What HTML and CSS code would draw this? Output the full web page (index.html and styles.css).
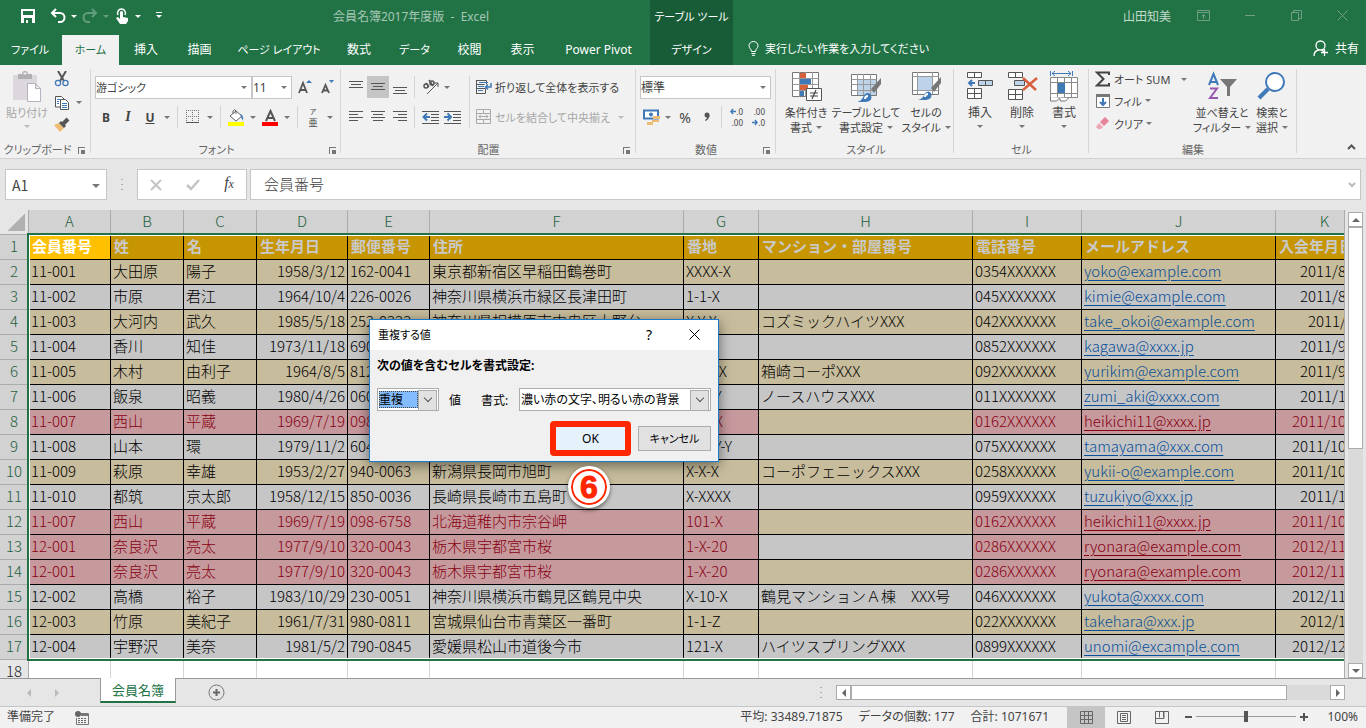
FILE: index.html
```
<!DOCTYPE html>
<html lang="ja">

<head>
    <meta charset="UTF-8">
    <title>会員名簿2017年度版 - Excel</title>
    <link rel="stylesheet" href="styles.css">
</head>

<body>
    <header class="header">
        <div class="header-main">
            <div class="titlebar">
                <div class="quick">
                    <button aria-label="上書き保存"><svg width="16" height="16" viewBox="0 0 16 16"><path d="M1 1h14v14H1z" fill="#fff"/><path d="M3 3h10v4H3zM4 10h8v5H4z" fill="#217346"/><path d="M6 12h2v3H6z" fill="#fff"/></svg></button>
                    <button aria-label="元に戻す"><svg width="16" height="16" viewBox="0 0 16 16"><path d="M2 5h8a4 4 0 0 1 0 9H8M6 1L2 5l4 4" fill="none" stroke="#fff" stroke-width="2"/></svg></button>
                    <span class="caret"></span>
                    <button class="faded" aria-label="やり直し"><svg width="16" height="16" viewBox="0 0 16 16"><path d="M14 5H6a4 4 0 0 0 0 9h2M10 1l4 4-4 4" fill="none" stroke="#fff" stroke-width="2"/></svg></button>
                    <span class="caret faded"></span>
                    <button aria-label="タッチ"><svg width="16" height="18" viewBox="0 0 16 18"><path d="M4 8a4 4 0 1 1 7 0" fill="none" stroke="#fff" stroke-width="1.500"/><path d="M6 5q1.500-2 3 0v5l5 1v3l-2 3H6l-4-6 2-1 2 2z" fill="#fff"/></svg></button>
                    <span class="caret"></span>
                    <span class="caret more"></span>
                </div>
                <div class="doc-title">会員名簿2017年度版&nbsp; -&nbsp; Excel</div>
            </div>
            <nav class="tabs">
                <button class="kana">ファイル</button>
                <button class="kana active">ホーム</button>
                <button>挿入</button>
                <button>描画</button>
                <button class="kana">ページ レイアウト</button>
                <button>数式</button>
                <button class="kana">データ</button>
                <button>校閲</button>
                <button>表示</button>
                <button>Power Pivot</button>
            </nav>
        </div>
        <div class="context kana">
            <span>テーブル ツール</span>
            <button>デザイン</button>
        </div>
        <div class="header-side">
            <div class="account">
                <span class="user">山田知美</span>
                <button aria-label="リボンの表示オプション"><svg width="13" height="11" viewBox="0 0 13 11"><path d="M.5.5h12v10H.5zM.5 2.500h12M6.500 9V4.500M4.500 6.500l2-2 2 2" fill="none" stroke="currentColor"/></svg></button>
                <button aria-label="最小化"><svg width="11" height="11" viewBox="0 0 11 11"><path d="M0 5.500h10" stroke="currentColor"/></svg></button>
                <button aria-label="元のサイズに戻す"><svg width="11" height="11" viewBox="0 0 11 11"><path d="M.5 2.500h7v8h-7zM2.500 2.500v-2h8v8h-3" fill="none" stroke="currentColor"/></svg></button>
                <button aria-label="閉じる"><svg width="11" height="11" viewBox="0 0 11 11"><path d="M.5.5l10 10M10.500.5l-10 10" stroke="currentColor"/></svg></button>
            </div>
            <div class="tell-row">
                <button class="tell kana"><svg width="11" height="15" viewBox="0 0 11 15"><path d="M3.500 10.500C3.500 8 1 7.500 1 4.800a4.500 4.300 0 0 1 9 0c0 2.700-2.500 3.200-2.500 5.700zM3.500 12.500h4M4 14.300h3" fill="none" stroke="#fff"/></svg>実行したい作業を入力してください</button>
                <button class="share"><svg width="16" height="17" viewBox="0 0 16 17"><circle cx="7.500" cy="5.500" r="4.500" fill="none" stroke="#fff" stroke-width="1.300"/><path d="M1 16c0-3 2-5.500 5-6M9 10l2 2M11.500 9v7M8 12.500h7" fill="none" stroke="#fff" stroke-width="1.300"/></svg>共有</button>
            </div>
        </div>
    </header>

    <section class="ribbon">
        <!-- clipboard -->
        <div class="group clipboard">
            <div class="group-body">
                <button class="big disabled kana">
                    <svg width="32" height="32" viewBox="0 0 32 32"><path d="M2 4h24v25H2z" fill="#dcd7dc"/><path d="M7 3h4a3 3 0 0 1 6 0h4v5H7z" fill="#b3aeb3"/><path d="M12.500 1.500h3v2h-3z" fill="#f0f0f0"/><path d="M16.500 12.500h8l5 5v13h-13zM24.500 12.500v5h5" fill="#fff" stroke="#b9b0c0"/></svg>
                    <span>貼り付け</span><i class="caret"></i>
                </button>
                <div class="clip-side">
                    <button class="tb" aria-label="切り取り"><svg width="16" height="16" viewBox="0 0 16 16"><path d="M4 0l6 10M12 0L6 10" stroke="#555" stroke-width="2"/><circle cx="4" cy="12" r="2.600" fill="none" stroke="#3f79b7" stroke-width="1.300"/><circle cx="11.500" cy="12" r="2.600" fill="none" stroke="#3f79b7" stroke-width="1.300"/></svg></button>
                    <div><button class="tb" aria-label="コピー"><svg width="16" height="16" viewBox="0 0 16 16"><path d="M1.500 1.500h6l3 3V12h-9z" fill="#fff" stroke="#555"/><path d="M6.500 4.500h5l3 3v7h-8z" fill="#fff" stroke="#555"/><path d="M3 4.500h3M3 6.500h2M3 8.500h2M8 8.500h5M8 10.500h5M8 12.500h5" stroke="#3f79b7"/></svg></button><i class="caret"></i></div>
                    <button class="tb" aria-label="書式のコピー"><svg width="16" height="16" viewBox="0 0 16 16"><path d="M0 8l5-2 5 5-4 4z" fill="#edbb71"/><path d="M6 5l5 5" stroke="#555" stroke-width="3"/><path d="M9 7l5-5" stroke="#555" stroke-width="4"/></svg></button>
                </div>
            </div>
            <div class="group-label">クリップボード<i class="launcher"></i></div>
        </div>

        <!-- font -->
        <div class="group font">
            <div class="group-body rows">
                <div class="row">
                    <span class="select font-name"><select aria-label="フォント" class="kana"><option>游ゴシック</option></select></span>
                    <span class="select font-size"><select aria-label="フォント サイズ"><option>11</option></select></span>
                    <button class="tb grow" aria-label="フォント サイズの拡大"><svg width="17" height="16" viewBox="0 0 17 16"><path d="M2 14L6 4l4 10M3.500 11h5" fill="none" stroke="#555" stroke-width="1.800"/><path d="M9 4l3-3 3 3z" fill="#3f79b7"/></svg></button>
                    <button class="tb" aria-label="フォント サイズの縮小"><svg width="17" height="16" viewBox="0 0 17 16"><path d="M3 14l3.500-8 3.500 8M4.500 11.500h4" fill="none" stroke="#555" stroke-width="1.800"/><path d="M10 1h5l-2.500 3z" fill="#3f79b7"/></svg></button>
                </div>
                <div class="row">
                    <button class="tb"><b>B</b></button>
                    <button class="tb italic">I</button>
                    <button class="tb underline"><b>U</b></button><i class="caret"></i>
                    <i class="sep"></i>
                    <button class="tb" aria-label="罫線"><svg width="14" height="14" viewBox="0 0 14 14"><path d="M0 .5h14M0 6.500h14M.5 0v12M6.500 0v12M12.500 0v12" stroke="#777" stroke-dasharray="1 1"/><path d="M0 12.500h13" stroke="#555"/></svg></button><i class="caret"></i>
                    <i class="sep"></i>
                    <button class="tb" aria-label="塗りつぶしの色"><svg width="17" height="17" viewBox="0 0 17 17"><path d="M2 7l6-5 6 5-6 5z" fill="#fff" stroke="#666"/><path d="M5 5V2q2-3 3 0v3" fill="none" stroke="#666"/><path d="M12 5q4 1 3 7l-2-4z" fill="#3f79b7"/><path d="M0 13h16v4H0z" fill="#ff0"/></svg></button><i class="caret"></i>
                    <button class="tb" aria-label="フォントの色"><svg width="17" height="17" viewBox="0 0 17 17"><path d="M4 12l4.500-10L13 12M5.500 9h6" fill="none" stroke="#555" stroke-width="2"/><path d="M0 13h16v4H0z" fill="#f00"/></svg></button><i class="caret"></i>
                    <i class="sep"></i>
                    <button class="tb ruby"><small>ア</small><span>亜</span></button><i class="caret"></i>
                </div>
            </div>
            <div class="group-label">フォント<i class="launcher"></i></div>
        </div>

        <!-- alignment -->
        <div class="group align">
            <div class="group-body">
                <div class="align-grid">
                    <button class="tb" aria-label="上揃え"><svg width="14" height="18" viewBox="0 0 14 18"><path d="M0 3.500h14M2 6.500h10M0 9.500h14" stroke="#555"/></svg></button>
                    <button class="tb on" aria-label="上下中央揃え"><svg width="14" height="18" viewBox="0 0 14 18"><path d="M0 5.500h14M2 8.500h10M0 11.500h14" stroke="#555"/></svg></button>
                    <button class="tb" aria-label="下揃え"><svg width="14" height="18" viewBox="0 0 14 18"><path d="M0 9.500h14M2 12.500h10M0 15.500h14" stroke="#555"/></svg></button>
                    <button class="tb left-line" aria-label="方向"><svg width="18" height="18" viewBox="0 0 18 18"><g fill="none" stroke="#555" stroke-width="1.500"><circle cx="4" cy="8" r="2"/><path d="M4 5l3 4M7 2l4 6"/><circle cx="10" cy="5" r="2"/></g><path d="M5 16L16 5M12 5h4v4" fill="none" stroke="#555"/></svg><i class="caret"></i></button>
                    <button class="tb" aria-label="左揃え"><svg width="14" height="14" viewBox="0 0 14 14"><path d="M0 1.500h14M0 4.500h9M0 7.500h14M0 10.500h9" stroke="#555"/></svg></button>
                    <button class="tb" aria-label="中央揃え"><svg width="14" height="14" viewBox="0 0 14 14"><path d="M0 1.500h14M2 4.500h10M0 7.500h14M2 10.500h10" stroke="#555"/></svg></button>
                    <button class="tb" aria-label="右揃え"><svg width="14" height="14" viewBox="0 0 14 14"><path d="M0 1.500h14M5 4.500h9M0 7.500h14M5 10.500h9" stroke="#555"/></svg></button>
                    <span class="left-line indent">
                        <button aria-label="インデントを減らす"><svg width="17" height="14" viewBox="0 0 17 14"><path d="M0 1.500h17M9 4.500h8M9 7.500h8M9 10.500h8M0 13.500h17" stroke="#555"/><path d="M8 7H2M5 3.500L1.500 7 5 10.500" fill="none" stroke="#3f79b7" stroke-width="2"/></svg></button>
                        <button aria-label="インデントを増やす"><svg width="17" height="14" viewBox="0 0 17 14"><path d="M0 1.500h17M9 4.500h8M9 7.500h8M9 10.500h8M0 13.500h17" stroke="#555"/><path d="M0 7h6M3.500 3.500L7 7l-3.500 3.500" fill="none" stroke="#3f79b7" stroke-width="2"/></svg></button>
                    </span>
                </div>
                <div class="wrap-col kana">
                    <button><svg width="16" height="16" viewBox="0 0 16 16"><path d="M.5 1v14M.5 1.500h10v4M.5 5.500h8M.5 9.500h9v5h-9" fill="none" stroke="#555"/><path d="M3 3.500h9M2 7.500h6M2 11.500h5" stroke="#3f79b7"/><path d="M15 4v4h-5M12 5.500L9.500 8l2.500 2.500" fill="none" stroke="#3f79b7" stroke-width="1.500"/></svg>折り返して全体を表示する</button>
                    <button class="disabled"><svg width="16" height="16" viewBox="0 0 16 16"><path d="M.5.5h14v14H.5zM.5 4.500h14M.5 10.500h14M7.500.5v4M7.500 10.500v4M3 7.500h9M5 5.500l-2 2 2 2M10 5.500l2 2-2 2" fill="none" stroke="#aaa"/></svg>セルを結合して中央揃え<i class="caret"></i></button>
                </div>
            </div>
            <div class="group-label">配置<i class="launcher"></i></div>
        </div>

        <!-- number -->
        <div class="group number">
            <div class="group-body rows">
                <div class="row">
                    <span class="select num-format"><select aria-label="表示形式"><option>標準</option></select></span>
                </div>
                <div class="row">
                    <button class="tb" aria-label="通貨表示形式"><svg width="17" height="17" viewBox="0 0 17 17"><path d="M1 1.500h14v8H1z" fill="#fff" stroke="#3f79b7" stroke-width="2"/><circle cx="8" cy="5.500" r="2" fill="#3f79b7"/><path d="M10 7h7v3h-7zM9 11h7v2H9zM4 13h6v3H4z" fill="#edbb71"/></svg></button><i class="caret"></i>
                    <button class="tb percent">%</button>
                    <button class="tb" aria-label="桁区切りスタイル"><svg width="8" height="10" viewBox="0 0 8 10"><circle cx="4" cy="3" r="2.500" fill="#555"/><path d="M6.500 3q0 4-4 6l-.5-1q2-1 2-3z" fill="#555"/></svg></button>
                    <i class="sep"></i>
                    <button class="tb decimal"><span><svg width="6" height="7" viewBox="0 0 6 7"><path d="M6 3.500H1M3 1L1 3.500 3 6" fill="none" stroke="#3f79b7" stroke-width="1.500"/></svg>.0</span><span>.00</span></button>
                    <button class="tb decimal"><span>.00</span><span><svg width="6" height="7" viewBox="0 0 6 7"><path d="M0 3.500h5M3 1l2 2.500L3 6" fill="none" stroke="#3f79b7" stroke-width="1.500"/></svg>.0</span></button>
                </div>
            </div>
            <div class="group-label">数値<i class="launcher"></i></div>
        </div>

        <!-- styles -->
        <div class="group styles">
            <div class="group-body kana">
                <button class="big"><svg width="32" height="32" viewBox="0 0 32 32"><path d="M2.500 1.500h26v24h-26z" fill="#fff" stroke="#777"/><path d="M2.500 7.500h26M2.500 13.500h26M2.500 19.500h26M9.500 1v25M15.500 1v25M22.500 1v25" stroke="#999"/><path d="M10 2h6v5h-6zM10 14h8v5h-8z" fill="#d9603d"/><path d="M10 8h11v5H10zM10 20h4v5h-4z" fill="#3f79b7"/><path d="M16.500 17.500h15v12h-15z" fill="#fff" stroke="#555"/><path d="M20 22h8M20 25h8M26 19l-4 9" stroke="#444" stroke-width="1.200"/></svg><span>条件付き</span><span>書式<i class="caret"></i></span></button>
                <button class="big wide"><svg width="32" height="32" viewBox="0 0 32 32"><path d="M1.500 3.500h25v21h-25z" fill="#fff" stroke="#777"/><path d="M8 9h18v15H8z" fill="#bdd3ea"/><path d="M1.500 8.500h25M1.500 13.500h25M1.500 19.500h25M7.500 3v21M13.500 3v21M20.500 3v21" stroke="#999"/><path d="M31 7v6l-7 9-3-4z" fill="#777"/><path d="M7 31q5-1 7-7 4-4 7 0 2 6-5 7z" fill="#3f79b7"/><path d="M15 28q0-3 3-3" fill="none" stroke="#fff" stroke-width="2"/></svg><span>テーブルとして</span><span>書式設定<i class="caret"></i></span></button>
                <button class="big"><svg width="32" height="32" viewBox="0 0 32 32"><path d="M2.500 1.500h26v22h-26z" fill="#fff" stroke="#777"/><path d="M2.500 5.500h26M2.500 19.500h26M7.500 1v22M22.500 1v22" stroke="#999"/><path d="M8 6h14v13H8z" fill="#bdd3ea"/><path d="M31 6v6l-7 9-3-4z" fill="#777"/><path d="M8 29q5-1 7-7 4-3 6 0 2 6-5 7z" fill="#3f79b7"/><path d="M15 26q0-3 3-3" fill="none" stroke="#fff" stroke-width="2"/></svg><span>セルの</span><span>スタイル<i class="caret"></i></span></button>
            </div>
            <div class="group-label">スタイル</div>
        </div>

        <!-- cells -->
        <div class="group cells">
            <div class="group-body">
                <button class="big"><svg width="32" height="32" viewBox="0 0 32 32"><path d="M3.500 1.500h14v5h-14zM10.500 1.500v5M3.500 17.500h14v10h-14zM3.500 22.500h14M10.500 17.500v10" fill="#fff" stroke="#555"/><path d="M14.500 9.500h14v5h-14zM21.500 9.500v5" fill="#bdd3ea" stroke="#555"/><path d="M11 12H5M8 9l-3 3 3 3" fill="none" stroke="#3f79b7" stroke-width="2"/></svg><span>挿入</span><i class="caret"></i></button>
                <button class="big"><svg width="32" height="32" viewBox="0 0 32 32"><path d="M2.500 1.500h14v5h-14zM9.500 1.500v5M2.500 18.500h14v10h-14zM2.500 23.500h14M9.500 18.500v10" fill="#fff" stroke="#555"/><path d="M8.500 9.500h10v5h-10z" fill="#bdd3ea" stroke="#555"/><path d="M17 7l13 12M31 7L17 19" stroke="#d9603d" stroke-width="2.500"/></svg><span>削除</span><i class="caret"></i></button>
                <button class="big"><svg width="32" height="32" viewBox="0 0 32 32"><path d="M2.500 0v5M24.500 0v5M4 2.500h19M7 0L4 2.500 7 5M20 0l3 2.500L20 5" fill="none" stroke="#3f79b7"/><path d="M2.500 6.500h27v20h-27zM2.500 11.500h27M2.500 22.500h27M9.500 6v20M16.500 6v20M23.500 6v20" fill="#fff" stroke="#888"/><path d="M10 12h7v10h-7z" fill="#3f79b7"/><path d="M2.500 26v4h6l3-3 1 3h5l3-3" fill="#fff" stroke="#777"/></svg><span>書式</span><i class="caret"></i></button>
            </div>
            <div class="group-label">セル</div>
        </div>

        <!-- editing -->
        <div class="group editing">
            <div class="group-body kana">
                <div class="edit-col">
                    <button><svg width="16" height="16" viewBox="0 0 16 16"><path d="M14 4V1.500H2L8.500 8 2 14.500h12V12" fill="none" stroke="#444" stroke-width="2"/></svg>オート SUM<i class="caret far"></i></button>
                    <button><svg width="16" height="16" viewBox="0 0 16 16"><path d="M1.500 1.500h13v13h-13z" fill="#fff" stroke="#777"/><path d="M1 1h14v3H1z" fill="#777"/><path d="M8 5v7M5 9l3 3 3-3" fill="none" stroke="#3f79b7" stroke-width="2"/></svg>フィル<i class="caret"></i></button>
                    <button><svg width="16" height="16" viewBox="0 0 16 16"><path d="M5 6l5-5 4 4-5 5z" fill="#e8829a"/><path d="M4 7l4 4-2 2H3l-2-2z" fill="#eea5b4"/></svg>クリア<i class="caret"></i></button>
                </div>
                <button class="big sort"><svg width="32" height="32" viewBox="0 0 32 32"><path d="M3 14L7.500 3 12 14M5 11h6" fill="none" stroke="#3f79b7" stroke-width="2"/><path d="M4 17.500h7L4 27h8" fill="none" stroke="#9658b0" stroke-width="2"/><path d="M14 8h17l-7 8v9h-3v-9z" fill="#777"/></svg><span>並べ替えと</span><span>フィルター<i class="caret"></i></span></button>
                <button class="big"><svg width="32" height="32" viewBox="0 0 32 32"><circle cx="19" cy="11" r="9" fill="#fff" stroke="#3f79b7" stroke-width="2"/><path d="M12 18L3 27" stroke="#3f79b7" stroke-width="4"/></svg><span>検索と</span><span>選択<i class="caret"></i></span></button>
            </div>
            <div class="group-label">編集</div>
        </div>
        <button class="collapse" aria-label="リボンを折りたたむ"><svg width="9" height="6" viewBox="0 0 9 6"><path d="M1 5l3.500-3.500L8 5" fill="none" stroke="#555" stroke-width="2"/></svg></button>
    </section>

    <section class="formula-bar">
        <span class="select name-box"><input type="text" value="A1" aria-label="名前ボックス"></span>
        <i class="dots"></i>
        <div class="fx">
            <button aria-label="キャンセル"><svg width="12" height="12" viewBox="0 0 12 12"><path d="M1 1l10 10M11 1L1 11" stroke="#c4c4c4" stroke-width="2"/></svg></button>
            <button aria-label="入力"><svg width="14" height="12" viewBox="0 0 14 12"><path d="M1 6l4 4 8-9" fill="none" stroke="#c4c4c4" stroke-width="2.500"/></svg></button>
            <button class="fx-label">f<small>x</small></button>
        </div>
        <div class="formula">
            <input type="text" value="会員番号" aria-label="数式バー">
            <svg width="8" height="6" viewBox="0 0 8 6"><path d="M1 1l3 3 3-3" fill="none" stroke="#bbb" stroke-width="2"/></svg>
        </div>
    </section>

    <main class="work">
        <div class="sheet">
            <table>
                <colgroup>
                    <col class="c-head"><col class="c-a"><col class="c-b"><col class="c-c"><col class="c-d"><col class="c-e"><col class="c-f"><col class="c-g"><col class="c-h"><col class="c-i"><col class="c-j"><col class="c-k">
                </colgroup>
                <thead>
                    <tr><th class="corner"></th><th>A</th><th>B</th><th>C</th><th>D</th><th>E</th><th>F</th><th>G</th><th>H</th><th>I</th><th>J</th><th>K</th></tr>
                </thead>
                <tbody>
                    <tr class="title"><th>1</th><td class="current">会員番号</td><td>姓</td><td>名</td><td>生年月日</td><td>郵便番号</td><td>住所</td><td>番地</td><td>マンション・部屋番号</td><td>電話番号</td><td>メールアドレス</td><td>入会年月日</td></tr>
                    <tr><th>2</th><td>11-001</td><td>大田原</td><td>陽子</td><td>1958/3/12</td><td>162-0041</td><td>東京都新宿区早稲田鶴巻町</td><td>XXXX-X</td><td></td><td>0354XXXXXX</td><td><a href="#">yoko@example.com</a></td><td class="d9">2011/8</td></tr>
                    <tr><th>3</th><td>11-002</td><td>市原</td><td>君江</td><td>1964/10/4</td><td>226-0026</td><td>神奈川県横浜市緑区長津田町</td><td>1-1-X</td><td></td><td>045XXXXXXX</td><td><a href="#">kimie@example.com</a></td><td class="d9">2011/8</td></tr>
                    <tr><th>4</th><td>11-003</td><td>大河内</td><td>武久</td><td>1985/5/18</td><td>252-0333</td><td>神奈川県相模原市中央区大野台</td><td>X-Y-X</td><td>コズミックハイツXXX</td><td>042XXXXXXX</td><td><a href="#">take_okoi@example.com</a></td><td class="d8">2011/</td></tr>
                    <tr><th>5</th><td>11-004</td><td>香川</td><td>知佳</td><td>1973/11/18</td><td>690</td><td></td><td>X-X-X</td><td></td><td>0852XXXXXX</td><td><a href="#">kagawa@xxxx.jp</a></td><td class="d9">2011/9</td></tr>
                    <tr><th>6</th><td>11-005</td><td>木村</td><td>由利子</td><td>1964/8/5</td><td>812</td><td></td><td>X-XX-X</td><td>箱崎コーポXXX</td><td>092XXXXXXX</td><td><a href="#">yurikim@example.com</a></td><td class="d9">2011/9</td></tr>
                    <tr><th>7</th><td>11-006</td><td>飯泉</td><td>昭義</td><td>1980/4/26</td><td>060</td><td></td><td>XXX-Y</td><td>ノースハウスXXX</td><td>011XXXXXXX</td><td><a href="#">zumi_aki@xxxx.com</a></td><td class="d9">2011/1</td></tr>
                    <tr class="dup"><th>8</th><td>11-007</td><td>西山</td><td>平蔵</td><td>1969/7/19</td><td>098</td><td></td><td>101-X</td><td></td><td>0162XXXXXX</td><td><a href="#">heikichi11@xxxx.jp</a></td><td>2011/10</td></tr>
                    <tr><th>9</th><td>11-008</td><td>山本</td><td>環</td><td>1979/11/2</td><td>604</td><td></td><td>XXX-Y-Y</td><td></td><td>075XXXXXXX</td><td><a href="#">tamayama@xxx.com</a></td><td>2011/10</td></tr>
                    <tr><th>10</th><td>11-009</td><td>萩原</td><td>幸雄</td><td>1953/2/27</td><td>940-0063</td><td>新潟県長岡市旭町</td><td>X-X-X</td><td>コーポフェニックスXXX</td><td>0258XXXXXX</td><td><a href="#">yukii-o@example.com</a></td><td>2011/10</td></tr>
                    <tr><th>11</th><td>11-010</td><td>都筑</td><td>京太郎</td><td>1958/12/15</td><td>850-0036</td><td>長崎県長崎市五島町</td><td>X-XXXX</td><td></td><td>0959XXXXXX</td><td><a href="#">tuzukiyo@xxx.jp</a></td><td class="d9">2011/1</td></tr>
                    <tr class="dup"><th>12</th><td>11-007</td><td>西山</td><td>平蔵</td><td>1969/7/19</td><td>098-6758</td><td>北海道稚内市宗谷岬</td><td>101-X</td><td></td><td>0162XXXXXX</td><td><a href="#">heikichi11@xxxx.jp</a></td><td>2011/10</td></tr>
                    <tr class="dup"><th>13</th><td>12-001</td><td>奈良沢</td><td>亮太</td><td>1977/9/10</td><td>320-0043</td><td>栃木県宇都宮市桜</td><td>1-X-20</td><td></td><td>0286XXXXXX</td><td><a href="#">ryonara@example.com</a></td><td>2012/11</td></tr>
                    <tr class="dup"><th>14</th><td>12-001</td><td>奈良沢</td><td>亮太</td><td>1977/9/10</td><td>320-0043</td><td>栃木県宇都宮市桜</td><td>1-X-20</td><td></td><td>0286XXXXXX</td><td><a href="#">ryonara@example.com</a></td><td>2012/11</td></tr>
                    <tr><th>15</th><td>12-002</td><td>高橋</td><td>裕子</td><td>1983/10/29</td><td>230-0051</td><td>神奈川県横浜市鶴見区鶴見中央</td><td>X-10-X</td><td>鶴見マンションＡ棟　XXX号</td><td>046XXXXXXX</td><td><a href="#">yukota@xxxx.com</a></td><td>2012/11</td></tr>
                    <tr><th>16</th><td>12-003</td><td>竹原</td><td>美紀子</td><td>1961/7/31</td><td>980-0811</td><td>宮城県仙台市青葉区一番町</td><td>1-1-Z</td><td></td><td>022XXXXXXX</td><td><a href="#">takehara@xxx.jp</a></td><td class="d9">2012/1</td></tr>
                    <tr><th>17</th><td>12-004</td><td>宇野沢</td><td>美奈</td><td>1981/5/2</td><td>790-0845</td><td>愛媛県松山市道後今市</td><td>121-X</td><td>ハイツスプリングXXX</td><td>0899XXXXXX</td><td><a href="#">unomi@excample.com</a></td><td>2012/12</td></tr>
                </tbody>
                <tfoot>
                    <tr><th>18</th><td></td><td></td><td></td><td></td><td></td><td></td><td></td><td></td><td></td><td></td><td></td></tr>
                </tfoot>
            </table>
            <div class="selection"></div>
        </div>
        <div class="vscroll">
            <button class="arrow up" aria-label="上へ"></button>
            <div class="track"><div class="thumb"></div></div>
            <button class="arrow down" aria-label="下へ"></button>
        </div>
    </main>

    <div class="sheet-tabs">
        <button class="nav prev" aria-label="前のシート"></button>
        <button class="nav next" aria-label="次のシート"></button>
        <button class="sheet-tab">会員名簿</button>
        <button class="add" aria-label="新しいシート"><svg width="17" height="17" viewBox="0 0 17 17"><circle cx="8.500" cy="8.500" r="7.500" fill="none" stroke="#777"/><path d="M8.500 5v7M5 8.500h7" stroke="#666" stroke-width="2"/></svg></button>
        <i class="dots"></i>
        <div class="hscroll">
            <button class="arrow left" aria-label="左へ"></button>
            <div class="track"><div class="thumb"></div></div>
            <button class="arrow right" aria-label="右へ"></button>
        </div>
    </div>

    <footer class="status">
        <span>準備完了</span>
        <svg class="macro" width="14" height="14" viewBox="0 0 14 14"><path d="M5 2.500h8.500v11h-12V7" fill="none" stroke="#777"/><circle cx="3" cy="3" r="3" fill="#666"/><path d="M6 3h7v2H6z" fill="#777"/><path d="M3 7.500h9M3 9.500h9M3 11.500h9" stroke="#666" stroke-dasharray="2 1"/></svg>
        <div class="totals"><span>平均: 33489.71875</span><span>データの個数: 177</span><span>合計: 1071671</span></div>
        <div class="views">
            <button class="on" aria-label="標準"><svg width="13" height="13" viewBox="0 0 13 13"><path d="M.5.5h12v12H.5zM.5 4.500h12M.5 8.500h12M4.500.5v12M8.500.5v12" fill="none" stroke="#666"/></svg></button>
            <button aria-label="ページ レイアウト"><svg width="14" height="13" viewBox="0 0 14 13"><path d="M.5.5h13v12H.5zM3.500 2.500h7v8h-7zM5 4.500h4M5 6.500h4M5 8.500h4" fill="none" stroke="#666"/></svg></button>
            <button aria-label="改ページ プレビュー"><svg width="14" height="13" viewBox="0 0 14 13"><path d="M.5.5h13v12H.5zM4.500.5v6M8.500.5v6M1 7.500h8V1" fill="none" stroke="#666"/></svg></button>
        </div>
        <div class="zoom">
            <button aria-label="縮小"><svg width="7" height="8" viewBox="0 0 7 8"><path d="M0 4h7" stroke="#555" stroke-width="2"/></svg></button>
            <input type="range" min="0" max="100" value="50" aria-label="ズーム">
            <button aria-label="拡大"><svg width="8" height="8" viewBox="0 0 8 8"><path d="M0 4h8M4 0v8" stroke="#555" stroke-width="2"/></svg></button>
            <span>100%</span>
        </div>
    </footer>

    <div class="dialog" role="dialog" aria-labelledby="dialogTitle">
        <div class="dialog-title">
            <span id="dialogTitle">重複する値</span>
            <button class="help">?</button>
            <button aria-label="閉じる"><svg width="11" height="11" viewBox="0 0 11 11"><path d="M.5.5l10 10M10.500.5l-10 10" stroke="#000"/></svg></button>
        </div>
        <div class="dialog-body">
            <p>次の値を含むセルを書式設定:</p>
            <div class="dialog-fields">
                <span class="combo kind"><select id="kind"><option>重複</option></select></span>
                <label for="kind">値</label>
                <label for="format" class="format-label">書式:</label>
                <span class="combo format"><select id="format"><option>濃い赤の文字、明るい赤の背景</option></select></span>
            </div>
            <div class="dialog-buttons">
                <button class="ok">OK</button>
                <button class="kana">キャンセル</button>
            </div>
        </div>
        <div class="step">6</div>
    </div>
</body>

</html>
```
FILE: styles.css
```
* {
    box-sizing: border-box;
}

body {
    position: relative;
    display: flex;
    flex-direction: column;
    height: 100vh;
    margin: 0;
    overflow: hidden;
    background: #e6e6e6;
    color: #444;
    font-family: "Noto Sans", "Noto Sans CJK JP", sans-serif;
    font-size: 12px;
    font-feature-settings: "palt";
}

button,
input,
select {
    margin: 0;
    padding: 0;
    border: 0;
    background: none;
    color: inherit;
    font: inherit;
    font-feature-settings: inherit;
    white-space: nowrap;
}

.kana {
    font-size: 11px;
}

svg {
    flex: none;
}

.caret {
    display: inline-block;
    flex: none;
    border: 3px solid transparent;
    border-top-color: currentColor;
    border-bottom: 0;
}

/* header */
.header {
    display: flex;
    flex: none;
    height: 65px;
    background: #217346;
    color: #fff;
}

.header-main {
    flex: none;
    width: 650px;
}

.titlebar {
    display: flex;
    align-items: center;
    height: 35px;
    padding-bottom: 3px;
}

.quick {
    display: flex;
    align-items: center;
    gap: 5px;
    width: 172px;
    padding-left: 20px;
}

.quick button + button {
    margin-left: 9px;
}

.quick button {
    display: flex;
}

.faded {
    opacity: 0.3;
}

.more {
    position: relative;
    margin-left: 10px;
}

.more::before {
    content: "";
    position: absolute;
    top: -6px;
    left: -3px;
    width: 6px;
    height: 1px;
    background: #fff;
}

.doc-title {
    flex: 1;
    text-align: center;
    color: #a6c7b5;
}

.tabs {
    display: grid;
    grid-template-columns: 60px 59px 54px 53px 106px 54px 57px 53px 53px 99px;
    height: 30px;
}

.tabs button {
    padding-bottom: 2px;
}

.tabs .active {
    margin-left: 2px;
    background: #f1f1f1;
    color: #217346;
}

.context {
    display: grid;
    grid-template-rows: 32px 33px;
    flex: none;
    width: 83px;
    align-items: center;
    justify-items: center;
    background: #185c37;
    white-space: nowrap;
}

.header-side {
    flex: 1;
}

.account {
    display: flex;
    align-items: center;
    justify-content: flex-end;
    height: 31px;
    padding-right: 18px;
    gap: 35px;
    color: #6f9f84;
}

.account .user {
    margin-right: -9px;
    color: #c4dacd;
}

.account button {
    display: flex;
}

.tell-row {
    display: flex;
    justify-content: space-between;
    height: 34px;
    padding: 0 7px 0 15px;
}

.tell,
.share {
    display: flex;
    align-items: center;
    gap: 6px;
}

/* ribbon */
.ribbon {
    display: grid;
    grid-template-columns: 91px 250px 295px 140px 178px 135px 208px 1fr;
    flex: none;
    height: 94px;
    border-bottom: 1px solid #d2d2d2;
    background: #f1f1f1;
}

.ribbon .caret {
    border-top-color: #777;
}

.ribbon .disabled .caret {
    border-top-color: #bbb;
}

.group {
    display: grid;
    grid-template-rows: 76px 17px;
    background: linear-gradient(#d5d5d5, #d5d5d5) right 4px / 1px 84px no-repeat;
}

.group-body {
    display: flex;
    padding: 6px 3px 0;
}

.group-label {
    position: relative;
    text-align: center;
    font-size: 11px;
    line-height: 17px;
    color: #666;
}

.clipboard .group-label {
    padding-right: 16px;
}

.launcher {
    position: absolute;
    right: 6px;
    bottom: 4px;
    width: 7px;
    height: 7px;
    border-top: 1px solid #777;
    border-left: 1px solid #777;
    background: linear-gradient(#777, #777) right bottom / 4px 4px no-repeat;
}

.big {
    display: flex;
    flex-direction: column;
    align-items: center;
    width: 54px;
    line-height: 15px;
}

.big svg {
    margin-bottom: 2px;
}

.big span .caret {
    margin: 0 0 3px 4px;
}

.big > .caret {
    margin-top: 5px;
}

.disabled {
    color: #a6a6a6;
}

.styles .wide {
    width: 66px;
}

.cells .big,
.editing .big {
    width: 42px;
}

.cells .group-body {
    padding-left: 5px;
}

.editing .sort {
    width: 58px;
}

.clipboard .group-body {
    padding: 3px 0 0;
}

.clipboard .big {
    width: 51px;
    padding: 3px 0 0 3px;
}

.clip-side {
    display: grid;
    grid-template-rows: 23px 23px 23px;
    white-space: nowrap;
}

.clip-side div {
    display: flex;
    align-items: center;
    gap: 3px;
}

.tb {
    display: inline-flex;
    flex: none;
    align-items: center;
    justify-content: center;
    width: 22px;
    height: 22px;
}

.rows {
    flex-direction: column;
    gap: 8px;
}

.row {
    display: flex;
    align-items: center;
    height: 22px;
}

.group-body.rows {
    padding: 11px 4px 0;
}

.row .caret {
    margin: 0 3px;
}

.sep {
    width: 1px;
    height: 22px;
    margin: 0 4px;
    background: #d5d5d5;
}

.select {
    position: relative;
    display: flex;
    height: 23px;
    border: 1px solid #c6c6c6;
    background: #fff;
}

.select::after {
    content: "";
    position: absolute;
    top: 50%;
    right: 4px;
    margin-top: -1px;
    border: 3px solid transparent;
    border-top-color: #777;
    border-bottom: 0;
    pointer-events: none;
}

.select select,
.combo select {
    width: 100%;
    appearance: none;
}

.font-name {
    width: 157px;
}

.font-size {
    width: 40px;
}

.grow {
    margin-left: 2px;
}

.italic {
    font-family: "Liberation Serif", serif;
    font-size: 14px;
    font-style: italic;
    font-weight: bold;
}

.underline {
    text-decoration: underline;
}

.ruby {
    flex-direction: column;
}

.ruby small {
    font-family: "Noto Sans CJK JP", sans-serif;
    font-size: 7px;
    line-height: 10px;
}

.ruby span {
    font-family: "Noto Sans CJK JP", sans-serif;
    font-size: 9px;
    line-height: 13px;
}

.align .group-body {
    padding: 11px 5px 0 4px;
}

.align-grid {
    display: grid;
    grid-template-columns: 22px 22px 22px 57px;
    grid-template-rows: 22px 22px;
    gap: 8px 0;
}

.on {
    background: #c5c5c5;
}

.left-line {
    width: 54px;
    margin-left: 3px;
    border-left: 1px solid #d5d5d5;
}

.tb.left-line {
    justify-content: flex-start;
    gap: 4px;
    padding-left: 7px;
}

.indent {
    display: flex;
    gap: 5px;
    padding-left: 7px;
    align-items: center;
}

.indent button {
    display: flex;
}

.wrap-col {
    display: grid;
    grid-template-rows: 22px 22px;
    gap: 8px;
    margin-left: 1px;
    margin-bottom: 13px;
    padding-left: 6px;
    border-left: 1px solid #d5d5d5;
}

.wrap-col button,
.edit-col button {
    display: flex;
    align-items: center;
    gap: 3px;
}

.wrap-col .caret {
    margin-left: 5px;
}

.num-format {
    width: 131px;
}

.percent {
    font-size: 14px;
}

.number .sep {
    margin: 0 3px;
}

.decimal {
    flex-direction: column;
    align-items: flex-end;
    padding-right: 4px;
    font-size: 8px;
    line-height: 11px;
}

.editing .group-body {
    padding-left: 6px;
}

.edit-col {
    display: grid;
    grid-template-rows: 20px 23px 23px;
    align-items: center;
    width: 98px;
    margin-top: -2px;
}

.edit-col .far {
    margin-left: 8px;
}

.collapse {
    place-self: end;
    padding: 0 10px 4px;
}

/* formula bar */
.formula-bar {
    display: flex;
    flex: none;
    height: 51px;
    padding: 10px 5px;
    font-family: "Noto Sans CJK JP", sans-serif;
    font-size: 14px;
    font-feature-settings: normal;
}

.formula-bar .select,
.fx,
.formula {
    height: 31px;
    border: 1px solid #c6c6c6;
    background: #fff;
}

.formula-bar .select::after {
    right: 6px;
    border-width: 4px 4px 0;
}

.name-box {
    width: 102px;
}

.name-box input {
    width: 80px;
    padding-left: 6px;
}

.dots {
    width: 30px;
    padding: 9px 0;
    background: radial-gradient(circle, #aaa 1px, transparent 1px) center / 100% 5px repeat-y content-box;
}

.fx {
    display: flex;
    align-items: center;
    justify-content: space-around;
    width: 110px;
    margin-right: 3px;
}

.fx-label {
    padding-bottom: 3px;
    font-family: "Liberation Serif", serif;
    font-size: 16px;
    font-style: italic;
}

.fx-label small {
    font-size: 12px;
}

.formula {
    display: flex;
    flex: 1;
    align-items: center;
    padding-right: 4px;
}

.formula input {
    flex: 1;
    padding: 0 0 3px 13px;
    font-size: 15px;
    font-weight: 300;
}

/* sheet */
.work {
    display: flex;
    flex: 1;
    min-height: 0;
}

.sheet {
    position: relative;
    flex: 1;
    overflow: hidden;
    border-right: 1px solid #ababab;
    background: #fff;
    color: #000;
    font-family: "Noto Sans CJK JP", sans-serif;
    font-size: 15px;
    font-feature-settings: normal;
    font-weight: 300;
}

table {
    width: 1374px;
    table-layout: fixed;
    border-spacing: 0;
}

.c-head { width: 29px; }
.c-a, .c-e { width: 82px; }
.c-b, .c-c { width: 73px; }
.c-d { width: 91px; }
.c-f { width: 254px; }
.c-g { width: 75px; }
.c-h { width: 214px; }
.c-i { width: 109px; }
.c-j { width: 194px; }
.c-k { width: 98px; }

th,
td {
    height: 25px;
    padding: 0 2px 2px;
    border-right: 1px solid #000;
    border-bottom: 1px solid #000;
    line-height: 22px;
    white-space: nowrap;
    overflow: hidden;
}

th {
    padding: 0 0 2px;
    border-color: #ababab;
    background: #d2d2d2;
    color: #1f6141;
    font-weight: 300;
}

.corner {
    background: linear-gradient(135deg, transparent 50%, #b1b1b1 50%) right 3px bottom 3px / 17px 17px no-repeat #e6e6e6;
}

td {
    background: #c6c6c6;
}

tbody tr:nth-child(even) td {
    background: #c7bc9c;
}

tbody .title td {
    padding-left: 3px;
    background: #c69500;
    color: #c9c9c9;
    font-weight: bold;
}

tbody .title .current {
    background: #ffc000;
    color: #fff;
}

td:nth-child(5) {
    text-align: right;
}

.title td:nth-child(5) {
    text-align: left;
}

tbody tr td:nth-child(12) {
    padding-left: 16px;
}

tbody tr .d9:nth-child(12) {
    padding-left: 24px;
}

tbody tr .d8:nth-child(12) {
    padding-left: 32px;
}

tbody .title td:nth-child(12) {
    padding-left: 3px;
}

td a {
    color: #094f99;
    text-underline-offset: 3px;
}

tbody .dup td:not(:nth-child(9)) {
    background: #c6999d;
}

.dup td,
.dup a {
    color: #860010;
}

tfoot td {
    border-color: #d4d4d4;
    background: #fff;
}

tfoot th {
    background: #e6e6e6;
    color: #222;
}

.selection {
    position: absolute;
    top: 23px;
    left: 27px;
    right: -4px;
    height: 428px;
    border: 2px solid #217346;
    box-shadow: inset 0 0 0 1px #fff;
    pointer-events: none;
}

/* scroll bars */
.vscroll {
    display: flex;
    flex-direction: column;
    width: 21px;
    padding: 2px 3px 0;
}

.track {
    flex: 1;
    background: #dadada;
}

.thumb {
    border: 1px solid #ababab;
    background: #fff;
}

.vscroll .thumb {
    height: 51%;
}

.hscroll .thumb {
    width: 91%;
    height: 15px;
}

.arrow {
    display: grid;
    place-items: center;
    width: 15px;
    height: 15px;
    border: 1px solid #ababab;
    background: #fff;
}

.arrow::before,
.nav::before {
    content: "";
    border: 4px solid transparent;
}

.up::before {
    border-bottom-color: #666;
    border-top: 0;
}

.down::before {
    border-top-color: #666;
    border-bottom: 0;
}

.left::before,
.prev::before {
    border-right-color: #666;
    border-left: 0;
}

.right::before,
.next::before {
    border-left-color: #666;
    border-right: 0;
}

/* sheet tabs */
.sheet-tabs {
    display: flex;
    flex: none;
    height: 28px;
    padding-left: 15px;
    border-top: 1px solid #999;
}

.nav {
    display: grid;
    place-items: center;
    width: 28px;
    opacity: 0.35;
}

.sheet-tab {
    width: 76px;
    height: 25px;
    margin: -1px 0 0 29px;
    border: 1px solid #999;
    border-width: 0 1px 2px;
    border-bottom-color: #217346;
    background: #fff;
    color: #217346;
    font-size: 13px;
    font-feature-settings: normal;
}

.add {
    display: flex;
    align-items: center;
    margin: 0 auto 0 32px;
}

.sheet-tabs .dots {
    padding: 6px 0;
}

.hscroll {
    display: flex;
    align-items: center;
    width: 509px;
    margin-right: 21px;
}

/* status bar */
.status {
    display: flex;
    flex: none;
    align-items: center;
    height: 22px;
    padding: 0 8px 0 7px;
    border-top: 1px solid #c6c6c6;
    background: #f1f1f1;
    line-height: 18px;
}

.status > span,
.totals,
.zoom {
    padding-bottom: 2px;
}

.macro {
    margin-left: 20px;
}

.totals {
    display: flex;
    gap: 16px;
    margin-left: auto;
}

.views {
    display: flex;
    height: 21px;
    margin-left: 18px;
}

.views button {
    display: flex;
    align-items: center;
    justify-content: center;
    width: 38px;
}

.zoom {
    display: flex;
    align-items: center;
    gap: 4px;
    margin-left: 4px;
}

.zoom button {
    display: flex;
}

.zoom span {
    width: 34px;
    margin-left: 12px;
    text-align: right;
}

.zoom input {
    width: 100px;
    height: 12px;
    appearance: none;
    background: linear-gradient(#999, #999) center / 100% 1px no-repeat;
}

.zoom input::-webkit-slider-thumb {
    width: 4px;
    height: 11px;
    appearance: none;
    background: #555;
}

/* dialog */
.dialog {
    position: absolute;
    top: 319px;
    left: 369px;
    width: 350px;
    height: 143px;
    border: 1px solid #1979ca;
    background: #f0f0f0;
    box-shadow: 0 3px 12px rgba(0, 0, 0, 0.5);
    color: #000;
}

.dialog-title {
    display: flex;
    align-items: center;
    height: 30px;
    padding: 0 18px 2px 8px;
    background: #fff;
    font-size: 11px;
}

.dialog-title .help {
    margin-left: auto;
    margin-right: 37px;
    font-size: 14px;
}

.dialog-title button {
    display: flex;
}

.dialog-body {
    padding: 6px 7px;
}

.dialog-body p {
    margin: 0;
    font-weight: bold;
    line-height: 20px;
}

.dialog-fields {
    display: flex;
    align-items: center;
    margin: 12px 0 15px;
}

.dialog-fields label {
    margin-left: 10px;
}

.dialog-fields .format-label {
    margin-left: 20px;
}

.combo {
    position: relative;
    display: flex;
    height: 23px;
    padding: 2px 20px 2px 1px;
    border: 1px solid #abadb3;
    background: #fff;
}

.combo::before {
    content: "";
    position: absolute;
    top: 1px;
    right: 1px;
    width: 17px;
    height: 19px;
    border: 1px solid #adadad;
    background: #e1e1e1;
}

.combo::after {
    content: "";
    position: absolute;
    top: 6px;
    right: 7px;
    width: 5px;
    height: 5px;
    border: solid #555;
    border-width: 0 1px 1px 0;
    transform: rotate(45deg);
}

.kind {
    width: 62px;
}

.kind select {
    outline: 1px dotted #444;
    outline-offset: -1px;
    background: #84bdff;
}

.format {
    width: 192px;
    margin-left: auto;
}

.dialog-buttons {
    display: flex;
    justify-content: flex-end;
    align-items: center;
    height: 24px;
}

.dialog-buttons button {
    width: 73px;
    height: 25px;
    border: 1px solid #adadad;
    background: #e1e1e1;
}

.dialog-buttons .ok {
    width: 81px;
    height: 35px;
    margin-right: 7px;
    border: 6px solid #ff2600;
    border-radius: 4px;
    background: #e5f1fb;
}

.step {
    position: absolute;
    top: 146px;
    left: 198px;
    display: grid;
    place-items: center;
    width: 42px;
    height: 42px;
    border: 3px solid #fff;
    border-radius: 50%;
    background: #fff;
    box-shadow: inset 0 0 0 2px #ff2600, 0 2px 4px rgba(0, 0, 0, 0.5);
    color: #ff2600;
    font-family: "Liberation Sans", sans-serif;
    font-size: 32px;
    font-weight: bold;
    line-height: 36px;
    -webkit-text-stroke: 1px #ff2600;
}
```
